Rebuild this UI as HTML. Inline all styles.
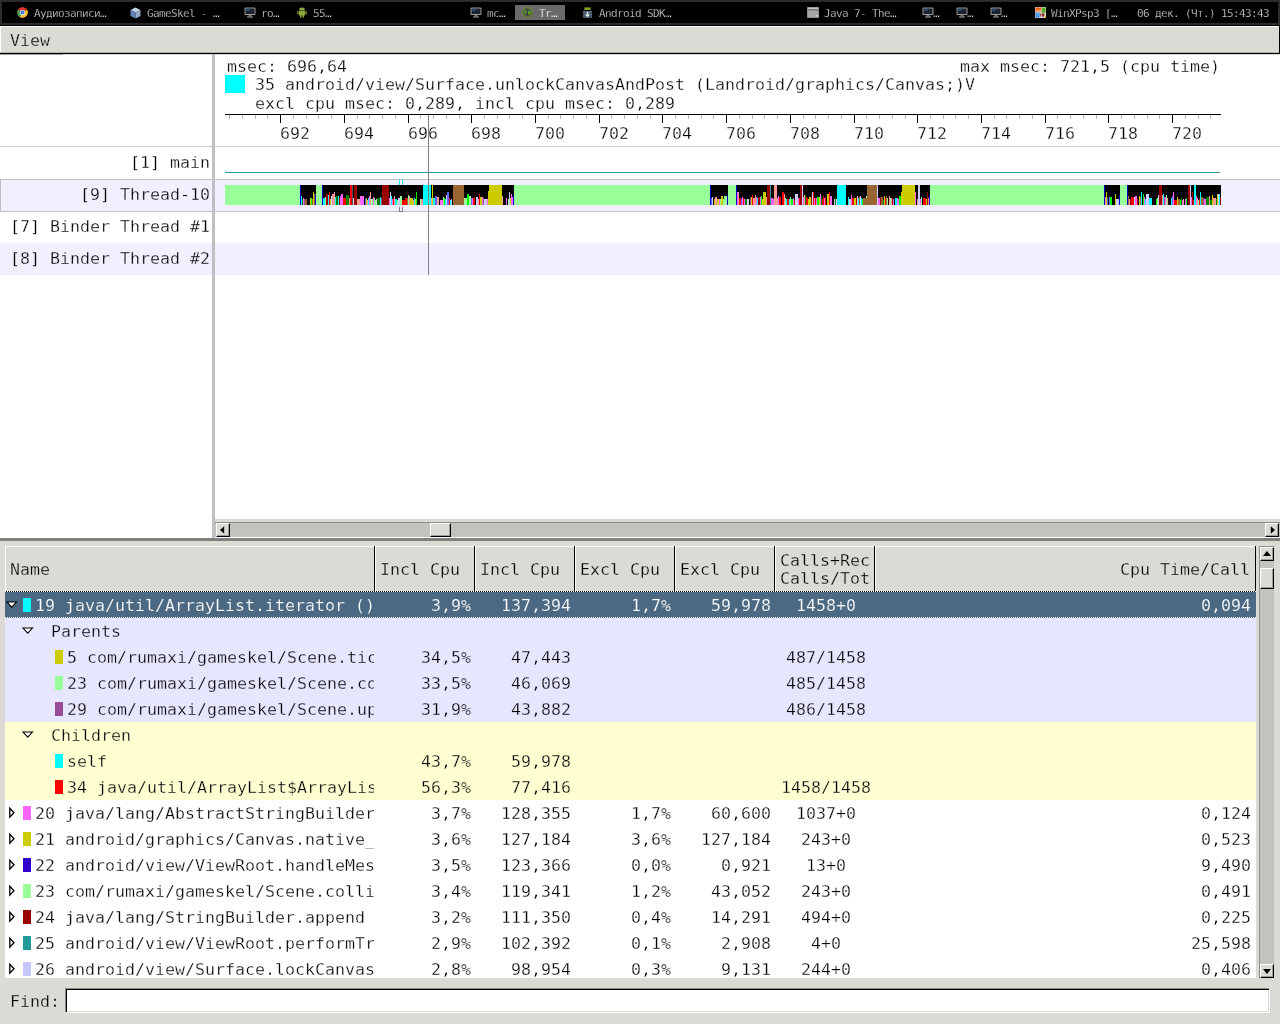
<!DOCTYPE html>
<html lang="ru"><head><meta charset="utf-8"><title>Traceview</title>
<style>
html,body{margin:0;padding:0;}
body{width:1280px;height:1024px;overflow:hidden;position:relative;background:#dcdad5;
 font-family:"DejaVu Sans Mono","Liberation Mono",monospace;font-size:16.61px;color:#000;}
.b{position:absolute;}
.t{position:absolute;white-space:pre;line-height:20px;height:20px;font-size:16.61px;}
.s{position:absolute;white-space:pre;line-height:12px;height:12px;font-size:11px;letter-spacing:-0.62px;color:#dcdcdc;}
svg{position:absolute;display:block;}
#w{position:absolute;left:0;top:0;width:1280px;height:1024px;overflow:hidden;will-change:transform;}

</style></head>
<body>
<div id="w">
<div class="b" style="left:0px;top:0px;width:1280px;height:25px;background:#2b2b2b;"></div>
<div class="b" style="left:2px;top:2px;width:1276px;height:21px;background:#000;"></div>
<div class="b" style="left:0px;top:25px;width:1280px;height:1px;background:#000;"></div>
<div class="b" style="left:0px;top:26px;width:1280px;height:1px;background:#fff;"></div>
<div class="b" style="left:515px;top:5px;width:50px;height:15px;background:#6a6a6a;"></div>
<svg style="left:17px;top:7px" width="11" height="11" viewBox="0 0 22 22"><circle cx="11" cy="11" r="10.5" fill="#d93a2b"/><path d="M11 11 L1.9 5.7 A10.5 10.5 0 0 0 6.2 20.3 Z" fill="#3aa757"/><path d="M11 11 L6.2 20.3 A10.5 10.5 0 0 0 20.1 5.7 Z" fill="#f2c230"/><path d="M11 11 L20.1 5.7 A10.5 10.5 0 0 0 1.9 5.7 Z" fill="#d93a2b"/><circle cx="11" cy="11" r="5.2" fill="#eef"/><circle cx="11" cy="11" r="4" fill="#3b7de0"/></svg>
<div class="s" style="left:34px;top:8px;-webkit-text-stroke:0.25px #000;">Аудиозаписи…</div>
<svg style="left:130px;top:7px" width="11" height="12" viewBox="0 0 22 24"><path d="M11 1 L21 6 L11 11 L1 6 Z" fill="#c4d4e8"/><path d="M1 6 L11 11 L11 23 L1 18 Z" fill="#5f82b4"/><path d="M21 6 L11 11 L11 23 L21 18 Z" fill="#93a9c6"/></svg>
<div class="s" style="left:147px;top:8px;-webkit-text-stroke:0.25px #000;">GameSkel - …</div>
<svg style="left:244px;top:7px" width="12" height="11" viewBox="0 0 24 22"><rect x="1" y="1" width="22" height="15" rx="2" fill="#9a9a9a"/><rect x="3" y="3" width="18" height="11" fill="#1c2430"/><rect x="5" y="5" width="6" height="2" fill="#3a7be0"/><rect x="9" y="16" width="6" height="3" fill="#777"/><rect x="6" y="19" width="12" height="2" fill="#aaa"/></svg>
<div class="s" style="left:261px;top:8px;-webkit-text-stroke:0.25px #000;">ro…</div>
<svg style="left:297px;top:7px" width="10" height="11" viewBox="0 0 20 22"><path d="M4 7 A6 6 0 0 1 16 7 Z" fill="#8faa3c"/><rect x="4" y="8" width="12" height="9" rx="1" fill="#8faa3c"/><rect x="0.5" y="8" width="2.6" height="7" rx="1.3" fill="#8faa3c"/><rect x="16.9" y="8" width="2.6" height="7" rx="1.3" fill="#8faa3c"/><rect x="6" y="16" width="3" height="5.5" rx="1.3" fill="#8faa3c"/><rect x="11" y="16" width="3" height="5.5" rx="1.3" fill="#8faa3c"/></svg>
<div class="s" style="left:313px;top:8px;-webkit-text-stroke:0.25px #000;">55…</div>
<svg style="left:470px;top:7px" width="12" height="11" viewBox="0 0 24 22"><rect x="1" y="1" width="22" height="15" rx="2" fill="#9a9a9a"/><rect x="3" y="3" width="18" height="11" fill="#1c2430"/><rect x="5" y="5" width="6" height="2" fill="#3a7be0"/><rect x="9" y="16" width="6" height="3" fill="#777"/><rect x="6" y="19" width="12" height="2" fill="#aaa"/></svg>
<div class="s" style="left:487px;top:8px;-webkit-text-stroke:0.25px #000;">mc…</div>
<svg style="left:522px;top:7px" width="11" height="11" viewBox="0 0 22 22"><circle cx="11" cy="11" r="9.6" fill="#4f5552" stroke="#6f9f12" stroke-width="1.8"/><path d="M5 8 L9 5 L10 11 L6 14 Z" fill="#5ea312"/><path d="M12 9 L17 7 L17 14 L13 17 Z" fill="#5ea312"/><path d="M9 3 L12 19" stroke="#2f3540" stroke-width="2"/></svg>
<div class="s" style="left:539px;top:8px;-webkit-text-stroke:0.25px #6a6a6a;color:#fff;">Tr…</div>
<svg style="left:583px;top:7px" width="9" height="11" viewBox="0 0 18 22"><path d="M2 6 A7 5.5 0 0 1 16 6 Z" fill="#7fa51e"/><path d="M3 0 L5 3 M15 0 L13 3" stroke="#7fa51e" stroke-width="1.5"/><rect x="0" y="8" width="18" height="14" fill="#4a5b6c"/><rect x="0" y="8" width="18" height="1.5" fill="#6d7f90"/><path d="M7.5 10 H10.5 V15 H14 L9 20.5 L4 15 H7.5 Z" fill="#e8edf2"/></svg>
<div class="s" style="left:599px;top:8px;-webkit-text-stroke:0.25px #000;">Android SDK…</div>
<svg style="left:807px;top:7px" width="12" height="11" viewBox="0 0 24 22"><rect x="0" y="0" width="24" height="22" rx="2" fill="#7d7d7d"/><rect x="1" y="1" width="22" height="4" fill="#c4c4c4"/><rect x="1" y="5" width="22" height="2" fill="#5a5a5a"/><rect x="1" y="7" width="22" height="14" fill="#a6a6a6"/><rect x="19" y="16" width="3" height="3" fill="#e0e0e0"/></svg>
<div class="s" style="left:824px;top:8px;-webkit-text-stroke:0.25px #000;">Java 7- The…</div>
<svg style="left:922px;top:7px" width="12" height="11" viewBox="0 0 24 22"><rect x="1" y="1" width="22" height="15" rx="2" fill="#9a9a9a"/><rect x="3" y="3" width="18" height="11" fill="#1c2430"/><rect x="5" y="5" width="6" height="2" fill="#3a7be0"/><rect x="9" y="16" width="6" height="3" fill="#777"/><rect x="6" y="19" width="12" height="2" fill="#aaa"/></svg>
<div class="s" style="left:933px;top:8px;-webkit-text-stroke:0.25px #000;">…</div>
<svg style="left:956px;top:7px" width="12" height="11" viewBox="0 0 24 22"><rect x="1" y="1" width="22" height="15" rx="2" fill="#9a9a9a"/><rect x="3" y="3" width="18" height="11" fill="#1c2430"/><rect x="5" y="5" width="6" height="2" fill="#3a7be0"/><rect x="9" y="16" width="6" height="3" fill="#777"/><rect x="6" y="19" width="12" height="2" fill="#aaa"/></svg>
<div class="s" style="left:967px;top:8px;-webkit-text-stroke:0.25px #000;">…</div>
<svg style="left:990px;top:7px" width="12" height="11" viewBox="0 0 24 22"><rect x="1" y="1" width="22" height="15" rx="2" fill="#9a9a9a"/><rect x="3" y="3" width="18" height="11" fill="#1c2430"/><rect x="5" y="5" width="6" height="2" fill="#3a7be0"/><rect x="9" y="16" width="6" height="3" fill="#777"/><rect x="6" y="19" width="12" height="2" fill="#aaa"/></svg>
<div class="s" style="left:1001px;top:8px;-webkit-text-stroke:0.25px #000;">…</div>
<svg style="left:1035px;top:7px" width="11" height="11" viewBox="0 0 22 22"><rect width="22" height="22" fill="#d9d4cc"/><path d="M1 1 H13 L12 9 Q6 8 1 11 Z" fill="#e8601c"/><path d="M1 7 Q6 5 12 6 L12 9 Q6 8 1 11 Z" fill="#f2a66a"/><path d="M14.5 1 H21 V12 Q17 10 13 12 Z" fill="#52a822"/><path d="M1 12 Q6 10 9.5 12 L9 21 H1 Z" fill="#2f86e0"/><path d="M3 13 Q6 12 8 13.5 L7.5 17 H3 Z" fill="#6ab6f0"/><rect x="10.5" y="13" width="2" height="6" fill="#8a2020"/><rect x="14" y="13" width="4.5" height="6" fill="#8a2020"/><path d="M17 22 L22 17 V22 Z" fill="#e8b838"/></svg>
<div class="s" style="left:1051px;top:8px;-webkit-text-stroke:0.25px #000;">WinXPsp3 […</div>
<div class="s" style="left:1137px;top:8px;-webkit-text-stroke:0.25px #000;">06 дек. (Чт.) 15:43:43</div>
<div class="b" style="left:0px;top:27px;width:1280px;height:26px;background:#dcdad5;"></div>
<div class="b" style="left:0px;top:27px;width:1px;height:26px;background:#fff;"></div>
<div class="t" style="top:31px;-webkit-text-stroke:0.3px #dcdad5;left:10px;">View</div>
<div class="b" style="left:0px;top:52px;width:1280px;height:1px;background:#b4b2ad;"></div>
<div class="b" style="left:0px;top:53px;width:1280px;height:1px;background:#000;"></div>
<div class="b" style="left:1279px;top:26px;width:1px;height:28px;background:#000;"></div>
<div class="b" style="left:0px;top:54px;width:1280px;height:484px;background:#fff;"></div>
<div class="b" style="left:0px;top:54px;width:63px;height:1px;background:#9a9a9a;"></div>
<div class="b" style="left:63px;top:54px;width:1217px;height:1px;background:#dadada;"></div>
<div class="t" style="top:57px;-webkit-text-stroke:0.3px #fff;left:227px;">msec: 696,64</div>
<div class="t" style="top:57px;-webkit-text-stroke:0.3px #fff;left:960px;">max msec: 721,5 (cpu time)</div>
<div class="b" style="left:225px;top:75px;width:20px;height:18px;background:#00ffff;"></div>
<div class="t" style="top:75px;-webkit-text-stroke:0.3px #fff;left:255px;">35 android/view/Surface.unlockCanvasAndPost (Landroid/graphics/Canvas;)V</div>
<div class="t" style="top:94px;-webkit-text-stroke:0.3px #fff;left:255px;">excl cpu msec: 0,289, incl cpu msec: 0,289</div>
<div class="b" style="left:0px;top:146px;width:1280px;height:1px;background:#d0d0c8;"></div>
<div class="b" style="left:0px;top:179px;width:1280px;height:33px;background:#c0c0c0;"></div>
<div class="b" style="left:1px;top:180px;width:1279px;height:31px;background:#f0f0ff;"></div>
<div class="b" style="left:0px;top:243px;width:1280px;height:32px;background:#f0f0ff;"></div>
<svg style="left:0;top:0" width="1280" height="540" shape-rendering="crispEdges"><rect x="225" y="114" width="996" height="1" fill="#000"/><rect x="229" y="115" width="1" height="4" fill="#b8b8b8"/><rect x="242" y="115" width="1" height="4" fill="#b8b8b8"/><rect x="255" y="115" width="1" height="4" fill="#b8b8b8"/><rect x="267" y="115" width="1" height="4" fill="#b8b8b8"/><rect x="280" y="115" width="1" height="8" fill="#000"/><rect x="293" y="115" width="1" height="4" fill="#b8b8b8"/><rect x="306" y="115" width="1" height="4" fill="#b8b8b8"/><rect x="318" y="115" width="1" height="4" fill="#b8b8b8"/><rect x="331" y="115" width="1" height="4" fill="#b8b8b8"/><rect x="344" y="115" width="1" height="8" fill="#000"/><rect x="357" y="115" width="1" height="4" fill="#b8b8b8"/><rect x="369" y="115" width="1" height="4" fill="#b8b8b8"/><rect x="382" y="115" width="1" height="4" fill="#b8b8b8"/><rect x="395" y="115" width="1" height="4" fill="#b8b8b8"/><rect x="408" y="115" width="1" height="8" fill="#000"/><rect x="420" y="115" width="1" height="4" fill="#b8b8b8"/><rect x="433" y="115" width="1" height="4" fill="#b8b8b8"/><rect x="446" y="115" width="1" height="4" fill="#b8b8b8"/><rect x="459" y="115" width="1" height="4" fill="#b8b8b8"/><rect x="471" y="115" width="1" height="8" fill="#000"/><rect x="484" y="115" width="1" height="4" fill="#b8b8b8"/><rect x="497" y="115" width="1" height="4" fill="#b8b8b8"/><rect x="509" y="115" width="1" height="4" fill="#b8b8b8"/><rect x="522" y="115" width="1" height="4" fill="#b8b8b8"/><rect x="535" y="115" width="1" height="8" fill="#000"/><rect x="548" y="115" width="1" height="4" fill="#b8b8b8"/><rect x="560" y="115" width="1" height="4" fill="#b8b8b8"/><rect x="573" y="115" width="1" height="4" fill="#b8b8b8"/><rect x="586" y="115" width="1" height="4" fill="#b8b8b8"/><rect x="599" y="115" width="1" height="8" fill="#000"/><rect x="611" y="115" width="1" height="4" fill="#b8b8b8"/><rect x="624" y="115" width="1" height="4" fill="#b8b8b8"/><rect x="637" y="115" width="1" height="4" fill="#b8b8b8"/><rect x="650" y="115" width="1" height="4" fill="#b8b8b8"/><rect x="662" y="115" width="1" height="8" fill="#000"/><rect x="675" y="115" width="1" height="4" fill="#b8b8b8"/><rect x="688" y="115" width="1" height="4" fill="#b8b8b8"/><rect x="701" y="115" width="1" height="4" fill="#b8b8b8"/><rect x="713" y="115" width="1" height="4" fill="#b8b8b8"/><rect x="726" y="115" width="1" height="8" fill="#000"/><rect x="739" y="115" width="1" height="4" fill="#b8b8b8"/><rect x="752" y="115" width="1" height="4" fill="#b8b8b8"/><rect x="764" y="115" width="1" height="4" fill="#b8b8b8"/><rect x="777" y="115" width="1" height="4" fill="#b8b8b8"/><rect x="790" y="115" width="1" height="8" fill="#000"/><rect x="803" y="115" width="1" height="4" fill="#b8b8b8"/><rect x="815" y="115" width="1" height="4" fill="#b8b8b8"/><rect x="828" y="115" width="1" height="4" fill="#b8b8b8"/><rect x="841" y="115" width="1" height="4" fill="#b8b8b8"/><rect x="854" y="115" width="1" height="8" fill="#000"/><rect x="866" y="115" width="1" height="4" fill="#b8b8b8"/><rect x="879" y="115" width="1" height="4" fill="#b8b8b8"/><rect x="892" y="115" width="1" height="4" fill="#b8b8b8"/><rect x="905" y="115" width="1" height="4" fill="#b8b8b8"/><rect x="917" y="115" width="1" height="8" fill="#000"/><rect x="930" y="115" width="1" height="4" fill="#b8b8b8"/><rect x="943" y="115" width="1" height="4" fill="#b8b8b8"/><rect x="955" y="115" width="1" height="4" fill="#b8b8b8"/><rect x="968" y="115" width="1" height="4" fill="#b8b8b8"/><rect x="981" y="115" width="1" height="8" fill="#000"/><rect x="994" y="115" width="1" height="4" fill="#b8b8b8"/><rect x="1006" y="115" width="1" height="4" fill="#b8b8b8"/><rect x="1019" y="115" width="1" height="4" fill="#b8b8b8"/><rect x="1032" y="115" width="1" height="4" fill="#b8b8b8"/><rect x="1045" y="115" width="1" height="8" fill="#000"/><rect x="1057" y="115" width="1" height="4" fill="#b8b8b8"/><rect x="1070" y="115" width="1" height="4" fill="#b8b8b8"/><rect x="1083" y="115" width="1" height="4" fill="#b8b8b8"/><rect x="1096" y="115" width="1" height="4" fill="#b8b8b8"/><rect x="1108" y="115" width="1" height="8" fill="#000"/><rect x="1121" y="115" width="1" height="4" fill="#b8b8b8"/><rect x="1134" y="115" width="1" height="4" fill="#b8b8b8"/><rect x="1147" y="115" width="1" height="4" fill="#b8b8b8"/><rect x="1159" y="115" width="1" height="4" fill="#b8b8b8"/><rect x="1172" y="115" width="1" height="8" fill="#000"/><rect x="1185" y="115" width="1" height="4" fill="#b8b8b8"/><rect x="1198" y="115" width="1" height="4" fill="#b8b8b8"/><rect x="1210" y="115" width="1" height="4" fill="#b8b8b8"/><rect x="225" y="172" width="995" height="1" fill="#2f9a9a"/><rect x="225" y="185" width="996" height="20" fill="#99ff99"/><rect x="300" y="185" width="16" height="20" fill="#000"/><rect x="301" y="196" width="1" height="9" fill="#00ffff"/><rect x="302" y="199" width="1" height="6" fill="#008000"/><rect x="303" y="198" width="1" height="7" fill="#ff66ff"/><rect x="304" y="199" width="1" height="6" fill="#994d99"/><rect x="305" y="199" width="1" height="6" fill="#996633"/><rect x="306" y="199" width="1" height="6" fill="#996633"/><rect x="310" y="198" width="1" height="7" fill="#cccc00"/><rect x="311" y="198" width="1" height="7" fill="#00ff00"/><rect x="312" y="199" width="1" height="6" fill="#996633"/><rect x="313" y="192" width="1" height="13" fill="#cccc00"/><rect x="314" y="194" width="2" height="11" fill="#996633"/><rect x="300" y="185" width="1" height="20" fill="#0000cc"/><rect x="315" y="195" width="1" height="10" fill="#0000cc"/><rect x="322" y="185" width="192" height="20" fill="#000"/><rect x="323" y="198" width="2" height="7" fill="#00ffff"/><rect x="325" y="197" width="1" height="8" fill="#99ff99"/><rect x="326" y="194" width="2" height="11" fill="#990000"/><rect x="328" y="195" width="1" height="10" fill="#00ffff"/><rect x="329" y="192" width="1" height="13" fill="#ff0000"/><rect x="330" y="199" width="1" height="6" fill="#cccc00"/><rect x="331" y="196" width="1" height="9" fill="#ccccff"/><rect x="332" y="194" width="2" height="11" fill="#ff9999"/><rect x="334" y="192" width="1" height="13" fill="#ff9999"/><rect x="335" y="197" width="1" height="8" fill="#00ffff"/><rect x="336" y="196" width="2" height="9" fill="#008000"/><rect x="338" y="196" width="1" height="9" fill="#00ffff"/><rect x="339" y="198" width="1" height="7" fill="#990000"/><rect x="340" y="196" width="1" height="9" fill="#ff66ff"/><rect x="341" y="194" width="2" height="11" fill="#ff66ff"/><rect x="343" y="198" width="3" height="7" fill="#ff0000"/><rect x="346" y="195" width="3" height="10" fill="#008000"/><rect x="349" y="198" width="2" height="7" fill="#ff9999"/><rect x="351" y="198" width="1" height="7" fill="#ff0000"/><rect x="352" y="198" width="2" height="7" fill="#ccccff"/><rect x="355" y="197" width="2" height="8" fill="#99ff99"/><rect x="357" y="199" width="3" height="6" fill="#ff9999"/><rect x="360" y="196" width="3" height="9" fill="#ff66ff"/><rect x="363" y="196" width="1" height="9" fill="#ff66ff"/><rect x="365" y="199" width="1" height="6" fill="#6666ff"/><rect x="366" y="198" width="1" height="7" fill="#cccc00"/><rect x="367" y="200" width="1" height="5" fill="#ff9999"/><rect x="368" y="198" width="1" height="7" fill="#00ffff"/><rect x="369" y="196" width="1" height="9" fill="#ff66ff"/><rect x="370" y="192" width="1" height="13" fill="#ff9999"/><rect x="371" y="199" width="2" height="6" fill="#99ff99"/><rect x="373" y="197" width="1" height="8" fill="#ff66ff"/><rect x="374" y="198" width="1" height="7" fill="#99ff99"/><rect x="375" y="200" width="1" height="5" fill="#99ff99"/><rect x="376" y="199" width="1" height="6" fill="#ccccff"/><rect x="377" y="198" width="3" height="7" fill="#008000"/><rect x="380" y="197" width="1" height="8" fill="#00ffff"/><rect x="381" y="198" width="1" height="7" fill="#994d99"/><rect x="382" y="198" width="2" height="7" fill="#cccc00"/><rect x="384" y="200" width="3" height="5" fill="#ff0000"/><rect x="387" y="198" width="1" height="7" fill="#ccccff"/><rect x="388" y="196" width="1" height="9" fill="#008000"/><rect x="389" y="198" width="1" height="7" fill="#ff66ff"/><rect x="390" y="192" width="1" height="13" fill="#ccccff"/><rect x="391" y="196" width="1" height="9" fill="#00ffff"/><rect x="392" y="199" width="1" height="6" fill="#ff66ff"/><rect x="393" y="198" width="1" height="7" fill="#ff0000"/><rect x="394" y="196" width="1" height="9" fill="#ff9999"/><rect x="395" y="199" width="2" height="6" fill="#00ffff"/><rect x="397" y="200" width="1" height="5" fill="#99ff99"/><rect x="398" y="198" width="2" height="7" fill="#ccccff"/><rect x="400" y="196" width="2" height="9" fill="#99ff99"/><rect x="402" y="200" width="3" height="5" fill="#ff0000"/><rect x="405" y="198" width="1" height="7" fill="#ff0000"/><rect x="406" y="198" width="1" height="7" fill="#ff0000"/><rect x="407" y="198" width="1" height="7" fill="#996633"/><rect x="408" y="195" width="1" height="10" fill="#99ff99"/><rect x="409" y="196" width="1" height="9" fill="#ff9999"/><rect x="410" y="198" width="3" height="7" fill="#cccc00"/><rect x="413" y="200" width="1" height="5" fill="#ff9999"/><rect x="414" y="198" width="1" height="7" fill="#00ffff"/><rect x="415" y="199" width="1" height="6" fill="#cccc00"/><rect x="416" y="192" width="1" height="13" fill="#00ff00"/><rect x="420" y="199" width="1" height="6" fill="#99ff99"/><rect x="421" y="199" width="2" height="6" fill="#ff9999"/><rect x="423" y="198" width="1" height="7" fill="#ccccff"/><rect x="424" y="192" width="2" height="13" fill="#99ff99"/><rect x="426" y="197" width="1" height="8" fill="#cccc00"/><rect x="427" y="198" width="1" height="7" fill="#ff0000"/><rect x="428" y="197" width="1" height="8" fill="#ff9999"/><rect x="429" y="198" width="1" height="7" fill="#990000"/><rect x="430" y="198" width="1" height="7" fill="#00ffff"/><rect x="431" y="198" width="1" height="7" fill="#ff9999"/><rect x="432" y="199" width="1" height="6" fill="#ff66ff"/><rect x="433" y="198" width="2" height="7" fill="#00ffff"/><rect x="435" y="196" width="2" height="9" fill="#6666ff"/><rect x="437" y="197" width="2" height="8" fill="#ff9999"/><rect x="440" y="200" width="3" height="5" fill="#ff66ff"/><rect x="443" y="197" width="1" height="8" fill="#99ff99"/><rect x="444" y="198" width="1" height="7" fill="#00ff00"/><rect x="445" y="199" width="1" height="6" fill="#00ffff"/><rect x="446" y="195" width="1" height="10" fill="#ccccff"/><rect x="447" y="192" width="2" height="13" fill="#6666ff"/><rect x="449" y="198" width="1" height="7" fill="#ff0000"/><rect x="450" y="200" width="1" height="5" fill="#00ffff"/><rect x="451" y="199" width="1" height="6" fill="#ccccff"/><rect x="453" y="197" width="1" height="8" fill="#cccc00"/><rect x="454" y="197" width="2" height="8" fill="#ccccff"/><rect x="457" y="198" width="1" height="7" fill="#ccccff"/><rect x="458" y="197" width="1" height="8" fill="#00ffff"/><rect x="459" y="198" width="1" height="7" fill="#990000"/><rect x="460" y="198" width="2" height="7" fill="#ccccff"/><rect x="462" y="197" width="1" height="8" fill="#ff66ff"/><rect x="464" y="198" width="3" height="7" fill="#99ff99"/><rect x="467" y="194" width="2" height="11" fill="#00ff00"/><rect x="469" y="196" width="2" height="9" fill="#99ff99"/><rect x="471" y="198" width="1" height="7" fill="#6666ff"/><rect x="472" y="198" width="1" height="7" fill="#ff66ff"/><rect x="473" y="198" width="1" height="7" fill="#ff0000"/><rect x="474" y="197" width="1" height="8" fill="#ff0000"/><rect x="476" y="197" width="2" height="8" fill="#ccccff"/><rect x="478" y="199" width="1" height="6" fill="#ff9999"/><rect x="479" y="194" width="1" height="11" fill="#ff0000"/><rect x="480" y="197" width="1" height="8" fill="#cccc00"/><rect x="481" y="197" width="1" height="8" fill="#cccc00"/><rect x="482" y="197" width="1" height="8" fill="#ff66ff"/><rect x="483" y="198" width="1" height="7" fill="#994d99"/><rect x="484" y="199" width="3" height="6" fill="#ccccff"/><rect x="487" y="199" width="1" height="6" fill="#ff66ff"/><rect x="488" y="198" width="1" height="7" fill="#ff9999"/><rect x="489" y="198" width="3" height="7" fill="#ccccff"/><rect x="492" y="192" width="2" height="13" fill="#99ff99"/><rect x="494" y="198" width="1" height="7" fill="#ff66ff"/><rect x="495" y="198" width="3" height="7" fill="#99ff99"/><rect x="498" y="200" width="3" height="5" fill="#996633"/><rect x="501" y="199" width="1" height="6" fill="#99ff99"/><rect x="502" y="196" width="1" height="9" fill="#ff9999"/><rect x="506" y="198" width="1" height="7" fill="#ff66ff"/><rect x="508" y="199" width="1" height="6" fill="#99ff99"/><rect x="509" y="192" width="1" height="13" fill="#ccccff"/><rect x="510" y="198" width="1" height="7" fill="#cccc00"/><rect x="511" y="194" width="1" height="11" fill="#ff66ff"/><rect x="512" y="197" width="2" height="8" fill="#ff66ff"/><rect x="322" y="185" width="1" height="20" fill="#0000cc"/><rect x="350" y="185" width="2" height="20" fill="#ff0000"/><rect x="352" y="185" width="1" height="20" fill="#555"/><rect x="354" y="185" width="3" height="20" fill="#990000"/><rect x="382" y="185" width="7" height="20" fill="#990000"/><rect x="423" y="185" width="8" height="20" fill="#00ffff"/><rect x="432" y="185" width="1" height="20" fill="#cccc00"/><rect x="453" y="185" width="11" height="20" fill="#996633"/><rect x="489" y="185" width="13" height="20" fill="#cccc00"/><rect x="488" y="191" width="1" height="14" fill="#cccc00"/><rect x="513" y="195" width="1" height="10" fill="#0000cc"/><rect x="710" y="185" width="18" height="20" fill="#000"/><rect x="711" y="198" width="1" height="7" fill="#6666ff"/><rect x="712" y="197" width="1" height="8" fill="#ccccff"/><rect x="714" y="199" width="1" height="6" fill="#cccc00"/><rect x="715" y="197" width="2" height="8" fill="#ff9999"/><rect x="717" y="199" width="2" height="6" fill="#cccc00"/><rect x="719" y="199" width="1" height="6" fill="#ff66ff"/><rect x="720" y="199" width="1" height="6" fill="#99ff99"/><rect x="721" y="196" width="2" height="9" fill="#cccc00"/><rect x="723" y="199" width="1" height="6" fill="#99ff99"/><rect x="724" y="196" width="3" height="9" fill="#99ff99"/><rect x="727" y="199" width="1" height="6" fill="#008000"/><rect x="710" y="185" width="1" height="20" fill="#0000cc"/><rect x="727" y="195" width="1" height="10" fill="#0000cc"/><rect x="736" y="185" width="194" height="20" fill="#000"/><rect x="737" y="192" width="1" height="13" fill="#ff66ff"/><rect x="738" y="192" width="1" height="13" fill="#ff9999"/><rect x="739" y="198" width="2" height="7" fill="#ff0000"/><rect x="741" y="199" width="1" height="6" fill="#6666ff"/><rect x="742" y="197" width="1" height="8" fill="#ff66ff"/><rect x="743" y="198" width="1" height="7" fill="#ff0000"/><rect x="744" y="199" width="1" height="6" fill="#ff66ff"/><rect x="745" y="199" width="2" height="6" fill="#008000"/><rect x="747" y="199" width="2" height="6" fill="#ccccff"/><rect x="750" y="198" width="1" height="7" fill="#994d99"/><rect x="751" y="197" width="1" height="8" fill="#cccc00"/><rect x="752" y="195" width="1" height="10" fill="#ff0000"/><rect x="753" y="198" width="2" height="7" fill="#ff9999"/><rect x="755" y="195" width="1" height="10" fill="#ff9999"/><rect x="756" y="197" width="1" height="8" fill="#ff66ff"/><rect x="757" y="198" width="1" height="7" fill="#00ffff"/><rect x="758" y="197" width="2" height="8" fill="#990000"/><rect x="760" y="197" width="1" height="8" fill="#ff66ff"/><rect x="761" y="196" width="1" height="9" fill="#00ff00"/><rect x="762" y="199" width="1" height="6" fill="#cccc00"/><rect x="763" y="192" width="3" height="13" fill="#cccc00"/><rect x="766" y="197" width="1" height="8" fill="#ff9999"/><rect x="767" y="198" width="2" height="7" fill="#994d99"/><rect x="769" y="199" width="1" height="6" fill="#6666ff"/><rect x="770" y="198" width="1" height="7" fill="#ff0000"/><rect x="771" y="198" width="2" height="7" fill="#ff66ff"/><rect x="773" y="199" width="1" height="6" fill="#ff66ff"/><rect x="774" y="196" width="1" height="9" fill="#99ff99"/><rect x="775" y="198" width="3" height="7" fill="#ff9999"/><rect x="778" y="196" width="1" height="9" fill="#ff66ff"/><rect x="779" y="197" width="2" height="8" fill="#ff0000"/><rect x="782" y="192" width="2" height="13" fill="#ff0000"/><rect x="784" y="194" width="1" height="11" fill="#ff9999"/><rect x="785" y="198" width="1" height="7" fill="#99ff99"/><rect x="786" y="199" width="1" height="6" fill="#00ffff"/><rect x="787" y="199" width="2" height="6" fill="#ff0000"/><rect x="789" y="199" width="1" height="6" fill="#00ffff"/><rect x="790" y="197" width="1" height="8" fill="#99ff99"/><rect x="791" y="199" width="2" height="6" fill="#00ff00"/><rect x="793" y="198" width="1" height="7" fill="#ff66ff"/><rect x="794" y="200" width="1" height="5" fill="#ff0000"/><rect x="795" y="194" width="3" height="11" fill="#ccccff"/><rect x="798" y="198" width="1" height="7" fill="#ff66ff"/><rect x="799" y="198" width="3" height="7" fill="#ff0000"/><rect x="802" y="197" width="2" height="8" fill="#ff66ff"/><rect x="804" y="195" width="1" height="10" fill="#ff9999"/><rect x="805" y="195" width="1" height="10" fill="#008000"/><rect x="806" y="197" width="1" height="8" fill="#ff0000"/><rect x="807" y="198" width="1" height="7" fill="#ff0000"/><rect x="808" y="199" width="1" height="6" fill="#cccc00"/><rect x="809" y="197" width="2" height="8" fill="#cccc00"/><rect x="811" y="197" width="1" height="8" fill="#990000"/><rect x="812" y="192" width="1" height="13" fill="#ccccff"/><rect x="813" y="192" width="1" height="13" fill="#ff0000"/><rect x="814" y="198" width="1" height="7" fill="#ff66ff"/><rect x="815" y="198" width="1" height="7" fill="#ff0000"/><rect x="816" y="198" width="1" height="7" fill="#ff66ff"/><rect x="817" y="197" width="2" height="8" fill="#00ff00"/><rect x="819" y="197" width="1" height="8" fill="#cccc00"/><rect x="820" y="194" width="1" height="11" fill="#ff66ff"/><rect x="821" y="196" width="1" height="9" fill="#008000"/><rect x="822" y="199" width="1" height="6" fill="#ff0000"/><rect x="823" y="196" width="1" height="9" fill="#ff0000"/><rect x="824" y="198" width="1" height="7" fill="#ff66ff"/><rect x="825" y="197" width="1" height="8" fill="#ff0000"/><rect x="827" y="194" width="2" height="11" fill="#cccc00"/><rect x="829" y="192" width="1" height="13" fill="#ff0000"/><rect x="830" y="196" width="2" height="9" fill="#ff66ff"/><rect x="834" y="199" width="1" height="6" fill="#ccccff"/><rect x="835" y="197" width="1" height="8" fill="#008000"/><rect x="836" y="199" width="1" height="6" fill="#ccccff"/><rect x="837" y="197" width="1" height="8" fill="#ff0000"/><rect x="839" y="194" width="1" height="11" fill="#ff66ff"/><rect x="840" y="192" width="1" height="13" fill="#99ff99"/><rect x="841" y="197" width="2" height="8" fill="#99ff99"/><rect x="843" y="197" width="1" height="8" fill="#ff9999"/><rect x="844" y="199" width="1" height="6" fill="#99ff99"/><rect x="845" y="198" width="1" height="7" fill="#994d99"/><rect x="848" y="197" width="1" height="8" fill="#00ffff"/><rect x="849" y="199" width="2" height="6" fill="#ccccff"/><rect x="851" y="195" width="1" height="10" fill="#ff66ff"/><rect x="852" y="198" width="2" height="7" fill="#ff0000"/><rect x="854" y="198" width="2" height="7" fill="#cccc00"/><rect x="856" y="197" width="1" height="8" fill="#990000"/><rect x="857" y="196" width="1" height="9" fill="#ccccff"/><rect x="858" y="198" width="1" height="7" fill="#00ffff"/><rect x="859" y="197" width="1" height="8" fill="#996633"/><rect x="860" y="196" width="1" height="9" fill="#ccccff"/><rect x="861" y="198" width="1" height="7" fill="#00ffff"/><rect x="862" y="199" width="1" height="6" fill="#00ff00"/><rect x="863" y="198" width="1" height="7" fill="#ff9999"/><rect x="865" y="199" width="1" height="6" fill="#cccc00"/><rect x="866" y="196" width="1" height="9" fill="#99ff99"/><rect x="867" y="197" width="1" height="8" fill="#ff0000"/><rect x="868" y="196" width="1" height="9" fill="#cccc00"/><rect x="869" y="198" width="1" height="7" fill="#ff66ff"/><rect x="870" y="199" width="1" height="6" fill="#ccccff"/><rect x="871" y="197" width="1" height="8" fill="#ff0000"/><rect x="872" y="197" width="1" height="8" fill="#ff9999"/><rect x="874" y="199" width="2" height="6" fill="#ff0000"/><rect x="876" y="198" width="1" height="7" fill="#00ffff"/><rect x="877" y="198" width="3" height="7" fill="#ff66ff"/><rect x="880" y="197" width="1" height="8" fill="#990000"/><rect x="881" y="197" width="2" height="8" fill="#996633"/><rect x="883" y="200" width="1" height="5" fill="#008000"/><rect x="884" y="196" width="1" height="9" fill="#cccc00"/><rect x="885" y="198" width="1" height="7" fill="#ff0000"/><rect x="886" y="196" width="1" height="9" fill="#996633"/><rect x="887" y="198" width="1" height="7" fill="#99ff99"/><rect x="889" y="196" width="1" height="9" fill="#ff9999"/><rect x="890" y="198" width="1" height="7" fill="#99ff99"/><rect x="891" y="198" width="1" height="7" fill="#ff9999"/><rect x="892" y="198" width="1" height="7" fill="#990000"/><rect x="893" y="199" width="1" height="6" fill="#ff66ff"/><rect x="895" y="198" width="2" height="7" fill="#00ffff"/><rect x="897" y="198" width="1" height="7" fill="#ff66ff"/><rect x="898" y="199" width="1" height="6" fill="#ff66ff"/><rect x="899" y="196" width="3" height="9" fill="#00ff00"/><rect x="902" y="198" width="1" height="7" fill="#ff66ff"/><rect x="903" y="199" width="3" height="6" fill="#6666ff"/><rect x="906" y="194" width="1" height="11" fill="#cccc00"/><rect x="907" y="197" width="1" height="8" fill="#996633"/><rect x="908" y="196" width="1" height="9" fill="#ff9999"/><rect x="909" y="200" width="3" height="5" fill="#ff0000"/><rect x="912" y="194" width="2" height="11" fill="#ccccff"/><rect x="914" y="192" width="2" height="13" fill="#ff66ff"/><rect x="917" y="199" width="1" height="6" fill="#ff9999"/><rect x="918" y="199" width="3" height="6" fill="#ff66ff"/><rect x="921" y="197" width="1" height="8" fill="#99ff99"/><rect x="923" y="198" width="3" height="7" fill="#ff0000"/><rect x="926" y="199" width="1" height="6" fill="#cccc00"/><rect x="927" y="192" width="1" height="13" fill="#990000"/><rect x="928" y="198" width="1" height="7" fill="#ff9999"/><rect x="929" y="197" width="1" height="8" fill="#00ffff"/><rect x="736" y="185" width="1" height="20" fill="#0000cc"/><rect x="767" y="185" width="3" height="20" fill="#990000"/><rect x="770" y="185" width="1" height="20" fill="#339999"/><rect x="774" y="185" width="3" height="20" fill="#ff9999"/><rect x="800" y="185" width="2" height="20" fill="#990000"/><rect x="802" y="185" width="1" height="20" fill="#ccccff"/><rect x="837" y="185" width="9" height="20" fill="#00ffff"/><rect x="867" y="185" width="10" height="20" fill="#996633"/><rect x="877" y="185" width="1" height="20" fill="#ccccff"/><rect x="863" y="198" width="4" height="7" fill="#996633"/><rect x="902" y="185" width="13" height="20" fill="#cccc00"/><rect x="901" y="192" width="1" height="13" fill="#cccc00"/><rect x="918" y="185" width="2" height="20" fill="#ccccff"/><rect x="929" y="195" width="1" height="10" fill="#0000cc"/><rect x="1104" y="185" width="16" height="20" fill="#000"/><rect x="1105" y="197" width="1" height="8" fill="#ff9999"/><rect x="1106" y="192" width="1" height="13" fill="#cccc00"/><rect x="1107" y="198" width="1" height="7" fill="#6666ff"/><rect x="1109" y="197" width="1" height="8" fill="#6666ff"/><rect x="1110" y="197" width="2" height="8" fill="#00ff00"/><rect x="1115" y="194" width="1" height="11" fill="#cccc00"/><rect x="1116" y="199" width="3" height="6" fill="#ccccff"/><rect x="1119" y="196" width="1" height="9" fill="#008000"/><rect x="1104" y="185" width="1" height="20" fill="#0000cc"/><rect x="1119" y="195" width="1" height="10" fill="#0000cc"/><rect x="1127" y="185" width="94" height="20" fill="#000"/><rect x="1128" y="196" width="1" height="9" fill="#996633"/><rect x="1129" y="199" width="1" height="6" fill="#ff9999"/><rect x="1130" y="199" width="1" height="6" fill="#990000"/><rect x="1131" y="197" width="3" height="8" fill="#ff0000"/><rect x="1134" y="197" width="1" height="8" fill="#ccccff"/><rect x="1135" y="196" width="2" height="9" fill="#ff66ff"/><rect x="1137" y="199" width="1" height="6" fill="#ff0000"/><rect x="1139" y="196" width="1" height="9" fill="#cccc00"/><rect x="1140" y="197" width="1" height="8" fill="#996633"/><rect x="1141" y="192" width="1" height="13" fill="#00ffff"/><rect x="1143" y="194" width="1" height="11" fill="#00ff00"/><rect x="1144" y="197" width="1" height="8" fill="#ff66ff"/><rect x="1145" y="199" width="1" height="6" fill="#00ffff"/><rect x="1146" y="194" width="3" height="11" fill="#ccccff"/><rect x="1149" y="198" width="3" height="7" fill="#00ffff"/><rect x="1156" y="199" width="1" height="6" fill="#00ff00"/><rect x="1157" y="198" width="1" height="7" fill="#99ff99"/><rect x="1158" y="195" width="2" height="10" fill="#ccccff"/><rect x="1160" y="199" width="1" height="6" fill="#990000"/><rect x="1161" y="192" width="1" height="13" fill="#cccc00"/><rect x="1162" y="195" width="1" height="10" fill="#ff9999"/><rect x="1163" y="194" width="1" height="11" fill="#00ffff"/><rect x="1164" y="197" width="1" height="8" fill="#994d99"/><rect x="1165" y="197" width="1" height="8" fill="#ff66ff"/><rect x="1166" y="195" width="1" height="10" fill="#99ff99"/><rect x="1167" y="198" width="1" height="7" fill="#ff9999"/><rect x="1171" y="198" width="1" height="7" fill="#00ffff"/><rect x="1172" y="196" width="1" height="9" fill="#6666ff"/><rect x="1173" y="192" width="1" height="13" fill="#ff66ff"/><rect x="1174" y="200" width="3" height="5" fill="#ff0000"/><rect x="1177" y="197" width="1" height="8" fill="#cccc00"/><rect x="1178" y="199" width="2" height="6" fill="#996633"/><rect x="1180" y="200" width="1" height="5" fill="#00ff00"/><rect x="1181" y="198" width="1" height="7" fill="#008000"/><rect x="1182" y="200" width="1" height="5" fill="#ff66ff"/><rect x="1183" y="199" width="1" height="6" fill="#ff9999"/><rect x="1185" y="199" width="1" height="6" fill="#ff66ff"/><rect x="1186" y="198" width="1" height="7" fill="#00ff00"/><rect x="1188" y="197" width="1" height="8" fill="#ff66ff"/><rect x="1189" y="198" width="1" height="7" fill="#990000"/><rect x="1190" y="197" width="1" height="8" fill="#ff0000"/><rect x="1191" y="197" width="1" height="8" fill="#ff66ff"/><rect x="1192" y="192" width="1" height="13" fill="#990000"/><rect x="1193" y="200" width="1" height="5" fill="#ff0000"/><rect x="1194" y="196" width="3" height="9" fill="#ff66ff"/><rect x="1197" y="198" width="1" height="7" fill="#ff9999"/><rect x="1198" y="200" width="1" height="5" fill="#99ff99"/><rect x="1199" y="199" width="1" height="6" fill="#ff0000"/><rect x="1200" y="192" width="1" height="13" fill="#00ffff"/><rect x="1201" y="197" width="2" height="8" fill="#996633"/><rect x="1203" y="198" width="1" height="7" fill="#994d99"/><rect x="1204" y="199" width="2" height="6" fill="#ff66ff"/><rect x="1206" y="197" width="3" height="8" fill="#008000"/><rect x="1209" y="196" width="1" height="9" fill="#ff9999"/><rect x="1210" y="200" width="2" height="5" fill="#008000"/><rect x="1212" y="195" width="1" height="10" fill="#cccc00"/><rect x="1213" y="198" width="3" height="7" fill="#ff9999"/><rect x="1216" y="199" width="1" height="6" fill="#008000"/><rect x="1217" y="194" width="1" height="11" fill="#cccc00"/><rect x="1218" y="194" width="1" height="11" fill="#ccccff"/><rect x="1219" y="194" width="1" height="11" fill="#00ffff"/><rect x="1220" y="197" width="1" height="8" fill="#990000"/><rect x="1127" y="185" width="1" height="20" fill="#0000cc"/><rect x="1159" y="185" width="3" height="20" fill="#990000"/><rect x="1188" y="185" width="2" height="20" fill="#990000"/><rect x="1190" y="185" width="1" height="20" fill="#ccccff"/><rect x="1194" y="185" width="2" height="20" fill="#00ffff"/><rect x="399" y="180" width="1" height="5" fill="#00ffff"/><rect x="402" y="180" width="1" height="5" fill="#00ffff"/><rect x="399" y="207" width="1" height="5" fill="#808080"/><rect x="402" y="207" width="1" height="5" fill="#808080"/><rect x="399" y="211" width="4" height="1" fill="#808080"/><rect x="428" y="115" width="1" height="160" fill="#808080"/></svg>
<div class="t" style="top:124px;-webkit-text-stroke:0.3px #fff;left:280px;">692</div>
<div class="t" style="top:124px;-webkit-text-stroke:0.3px #fff;left:344px;">694</div>
<div class="t" style="top:124px;-webkit-text-stroke:0.3px #fff;left:408px;">696</div>
<div class="t" style="top:124px;-webkit-text-stroke:0.3px #fff;left:471px;">698</div>
<div class="t" style="top:124px;-webkit-text-stroke:0.3px #fff;left:535px;">700</div>
<div class="t" style="top:124px;-webkit-text-stroke:0.3px #fff;left:599px;">702</div>
<div class="t" style="top:124px;-webkit-text-stroke:0.3px #fff;left:662px;">704</div>
<div class="t" style="top:124px;-webkit-text-stroke:0.3px #fff;left:726px;">706</div>
<div class="t" style="top:124px;-webkit-text-stroke:0.3px #fff;left:790px;">708</div>
<div class="t" style="top:124px;-webkit-text-stroke:0.3px #fff;left:854px;">710</div>
<div class="t" style="top:124px;-webkit-text-stroke:0.3px #fff;left:917px;">712</div>
<div class="t" style="top:124px;-webkit-text-stroke:0.3px #fff;left:981px;">714</div>
<div class="t" style="top:124px;-webkit-text-stroke:0.3px #fff;left:1045px;">716</div>
<div class="t" style="top:124px;-webkit-text-stroke:0.3px #fff;left:1108px;">718</div>
<div class="t" style="top:124px;-webkit-text-stroke:0.3px #fff;left:1172px;">720</div>
<div class="t" style="top:153px;-webkit-text-stroke:0.3px #fff;right:1070px;">[1] main</div>
<div class="t" style="top:185px;-webkit-text-stroke:0.3px #f0f0ff;right:1070px;">[9] Thread-10</div>
<div class="t" style="top:217px;-webkit-text-stroke:0.3px #fff;right:1070px;">[7] Binder Thread #1</div>
<div class="t" style="top:249px;-webkit-text-stroke:0.3px #f0f0ff;right:1070px;">[8] Binder Thread #2</div>
<div class="b" style="left:212px;top:54px;width:3px;height:484px;background:#c0c0c0;"></div>
<div class="b" style="left:215px;top:519px;width:1065px;height:19px;background:#dcdad5;"></div>
<div class="b" style="left:215px;top:537px;width:1065px;height:1px;background:#fff;"></div>
<div class="b" style="left:215px;top:522px;width:1065px;height:15px;background:#c4c2bd;border-top:1px solid #8e8c87;box-sizing:border-box;"></div>
<div class="b" style="left:216px;top:523px;width:14px;height:14px;background:#dcdad5;box-sizing:border-box;border:1px solid;border-color:#fff #000 #000 #fff;box-shadow:inset -1px -1px 0 #9e9c97;"></div>
<svg style="left:219px;top:525px" width="8" height="10"><path d="M5.2 1.3 L1 5 L5.2 8.7 Z" fill="#000"/></svg>
<div class="b" style="left:1265px;top:523px;width:14px;height:14px;background:#dcdad5;box-sizing:border-box;border:1px solid;border-color:#fff #000 #000 #fff;box-shadow:inset -1px -1px 0 #9e9c97;"></div>
<svg style="left:1268px;top:525px" width="8" height="10"><path d="M2.8 1.3 L7 5 L2.8 8.7 Z" fill="#000"/></svg>
<div class="b" style="left:430px;top:523px;width:21px;height:14px;background:#dcdad5;box-sizing:border-box;border:1px solid;border-color:#fff #000 #000 #fff;box-shadow:inset -1px -1px 0 #9e9c97;"></div>
<div class="b" style="left:0px;top:538px;width:1280px;height:3px;background:#808080;"></div>
<div class="b" style="left:5px;top:546px;width:1251px;height:46px;background:#dcdad5;"></div>
<div class="b" style="left:5px;top:546px;width:1251px;height:1px;background:#fff;"></div>
<div class="b" style="left:5px;top:546px;width:1px;height:45px;background:#fff;"></div>
<div class="b" style="left:5px;top:591px;width:1251px;height:1px;background:#000;"></div>
<div class="b" style="left:374px;top:546px;width:1px;height:45px;background:#000;"></div>
<div class="b" style="left:375px;top:546px;width:1px;height:45px;background:#fff;"></div>
<div class="b" style="left:474px;top:546px;width:1px;height:45px;background:#000;"></div>
<div class="b" style="left:475px;top:546px;width:1px;height:45px;background:#fff;"></div>
<div class="b" style="left:574px;top:546px;width:1px;height:45px;background:#000;"></div>
<div class="b" style="left:575px;top:546px;width:1px;height:45px;background:#fff;"></div>
<div class="b" style="left:674px;top:546px;width:1px;height:45px;background:#000;"></div>
<div class="b" style="left:675px;top:546px;width:1px;height:45px;background:#fff;"></div>
<div class="b" style="left:774px;top:546px;width:1px;height:45px;background:#000;"></div>
<div class="b" style="left:775px;top:546px;width:1px;height:45px;background:#fff;"></div>
<div class="b" style="left:874px;top:546px;width:1px;height:45px;background:#000;"></div>
<div class="b" style="left:875px;top:546px;width:1px;height:45px;background:#fff;"></div>
<div class="b" style="left:1255px;top:546px;width:1px;height:46px;background:#000;"></div>
<div class="t" style="top:560px;-webkit-text-stroke:0.3px #dcdad5;left:10px;">Name</div>
<div class="t" style="top:560px;-webkit-text-stroke:0.3px #dcdad5;left:380px;">Incl Cpu</div>
<div class="t" style="top:560px;-webkit-text-stroke:0.3px #dcdad5;left:480px;">Incl Cpu</div>
<div class="t" style="top:560px;-webkit-text-stroke:0.3px #dcdad5;left:580px;">Excl Cpu</div>
<div class="t" style="top:560px;-webkit-text-stroke:0.3px #dcdad5;left:680px;">Excl Cpu</div>
<div class="t" style="top:551px;-webkit-text-stroke:0.3px #dcdad5;left:780px;">Calls+Rec</div>
<div class="t" style="top:569px;-webkit-text-stroke:0.3px #dcdad5;left:780px;">Calls/Tot</div>
<div class="t" style="top:560px;-webkit-text-stroke:0.3px #dcdad5;right:30px;">Cpu Time/Call</div>
<div class="b" style="left:5px;top:592px;width:1251px;height:386px;background:#fff;"></div>
<div class="b" style="left:5px;top:592px;width:1251px;height:26px;background:#4b6983;"></div>
<div class="b" style="left:5px;top:618px;width:1251px;height:104px;background:#e6e6ff;"></div>
<div class="b" style="left:5px;top:722px;width:1251px;height:78px;background:#ffffd2;"></div>
<div class="b" style="left:5px;top:591px;width:1251px;height:0;border-top:1px dotted #fff;"></div>
<div class="b" style="left:5px;top:617px;width:1251px;height:0;border-top:1px dotted #fff;"></div>
<svg style="left:6px;top:601px" width="12" height="8"><path d="M1 1 H10.5 L5.75 6.2 Z" fill="#fff" stroke="#000" stroke-width="1.1"/></svg>
<div class="b" style="left:23px;top:598px;width:8px;height:14px;background:#00ffff;"></div>
<div class="t" style="left:35px;top:596px;width:339px;overflow:hidden;-webkit-text-stroke:0.2px #4b6983;color:#fff;">19 java/util/ArrayList.iterator ()Ljava/util/Iterator;</div>
<div class="t" style="top:596px;-webkit-text-stroke:0.2px #4b6983;right:809px;color:#fff;">3,9%</div>
<div class="t" style="top:596px;-webkit-text-stroke:0.2px #4b6983;right:709px;color:#fff;">137,394</div>
<div class="t" style="top:596px;-webkit-text-stroke:0.2px #4b6983;right:609px;color:#fff;">1,7%</div>
<div class="t" style="top:596px;-webkit-text-stroke:0.2px #4b6983;right:509px;color:#fff;">59,978</div>
<div class="t" style="top:596px;-webkit-text-stroke:0.2px #4b6983;left:796px;color:#fff;">1458+0</div>
<div class="t" style="top:596px;-webkit-text-stroke:0.2px #4b6983;right:29px;color:#fff;">0,094</div>
<svg style="left:22px;top:627px" width="12" height="8"><path d="M1 1 H10.5 L5.75 6.2 Z" fill="#fff" stroke="#000" stroke-width="1.1"/></svg>
<div class="t" style="left:51px;top:622px;width:323px;overflow:hidden;-webkit-text-stroke:0.3px #e6e6ff;">Parents</div>
<div class="b" style="left:55px;top:650px;width:8px;height:14px;background:#cccc00;"></div>
<div class="t" style="left:67px;top:648px;width:307px;overflow:hidden;-webkit-text-stroke:0.3px #e6e6ff;">5 com/rumaxi/gameskel/Scene.tick ()V</div>
<div class="t" style="top:648px;-webkit-text-stroke:0.3px #e6e6ff;right:809px;">34,5%</div>
<div class="t" style="top:648px;-webkit-text-stroke:0.3px #e6e6ff;right:709px;">47,443</div>
<div class="t" style="top:648px;-webkit-text-stroke:0.3px #e6e6ff;left:786px;">487/1458</div>
<div class="b" style="left:55px;top:676px;width:8px;height:14px;background:#99ff99;"></div>
<div class="t" style="left:67px;top:674px;width:307px;overflow:hidden;-webkit-text-stroke:0.3px #e6e6ff;">23 com/rumaxi/gameskel/Scene.collide ()V</div>
<div class="t" style="top:674px;-webkit-text-stroke:0.3px #e6e6ff;right:809px;">33,5%</div>
<div class="t" style="top:674px;-webkit-text-stroke:0.3px #e6e6ff;right:709px;">46,069</div>
<div class="t" style="top:674px;-webkit-text-stroke:0.3px #e6e6ff;left:786px;">485/1458</div>
<div class="b" style="left:55px;top:702px;width:8px;height:14px;background:#994d99;"></div>
<div class="t" style="left:67px;top:700px;width:307px;overflow:hidden;-webkit-text-stroke:0.3px #e6e6ff;">29 com/rumaxi/gameskel/Scene.update ()V</div>
<div class="t" style="top:700px;-webkit-text-stroke:0.3px #e6e6ff;right:809px;">31,9%</div>
<div class="t" style="top:700px;-webkit-text-stroke:0.3px #e6e6ff;right:709px;">43,882</div>
<div class="t" style="top:700px;-webkit-text-stroke:0.3px #e6e6ff;left:786px;">486/1458</div>
<svg style="left:22px;top:731px" width="12" height="8"><path d="M1 1 H10.5 L5.75 6.2 Z" fill="#fff" stroke="#000" stroke-width="1.1"/></svg>
<div class="t" style="left:51px;top:726px;width:323px;overflow:hidden;-webkit-text-stroke:0.3px #ffffd2;">Children</div>
<div class="b" style="left:55px;top:754px;width:8px;height:14px;background:#00ffff;"></div>
<div class="t" style="left:67px;top:752px;width:307px;overflow:hidden;-webkit-text-stroke:0.3px #ffffd2;">self</div>
<div class="t" style="top:752px;-webkit-text-stroke:0.3px #ffffd2;right:809px;">43,7%</div>
<div class="t" style="top:752px;-webkit-text-stroke:0.3px #ffffd2;right:709px;">59,978</div>
<div class="b" style="left:55px;top:780px;width:8px;height:14px;background:#ff0000;"></div>
<div class="t" style="left:67px;top:778px;width:307px;overflow:hidden;-webkit-text-stroke:0.3px #ffffd2;">34 java/util/ArrayList$ArrayListIterator.&lt;init&gt;</div>
<div class="t" style="top:778px;-webkit-text-stroke:0.3px #ffffd2;right:809px;">56,3%</div>
<div class="t" style="top:778px;-webkit-text-stroke:0.3px #ffffd2;right:709px;">77,416</div>
<div class="t" style="top:778px;-webkit-text-stroke:0.3px #ffffd2;left:781px;">1458/1458</div>
<svg style="left:8px;top:807px" width="8" height="13"><path d="M1.8 1.2 V10.2 L6 5.7 Z" fill="#fff" stroke="#000" stroke-width="1.3"/></svg>
<div class="b" style="left:23px;top:806px;width:8px;height:14px;background:#ff66ff;"></div>
<div class="t" style="left:35px;top:804px;width:339px;overflow:hidden;-webkit-text-stroke:0.3px #fff;">20 java/lang/AbstractStringBuilder.append0</div>
<div class="t" style="top:804px;-webkit-text-stroke:0.3px #fff;right:809px;">3,7%</div>
<div class="t" style="top:804px;-webkit-text-stroke:0.3px #fff;right:709px;">128,355</div>
<div class="t" style="top:804px;-webkit-text-stroke:0.3px #fff;right:609px;">1,7%</div>
<div class="t" style="top:804px;-webkit-text-stroke:0.3px #fff;right:509px;">60,600</div>
<div class="t" style="top:804px;-webkit-text-stroke:0.3px #fff;left:796px;">1037+0</div>
<div class="t" style="top:804px;-webkit-text-stroke:0.3px #fff;right:29px;">0,124</div>
<svg style="left:8px;top:833px" width="8" height="13"><path d="M1.8 1.2 V10.2 L6 5.7 Z" fill="#fff" stroke="#000" stroke-width="1.3"/></svg>
<div class="b" style="left:23px;top:832px;width:8px;height:14px;background:#cccc00;"></div>
<div class="t" style="left:35px;top:830px;width:339px;overflow:hidden;-webkit-text-stroke:0.3px #fff;">21 android/graphics/Canvas.native_drawBitmap</div>
<div class="t" style="top:830px;-webkit-text-stroke:0.3px #fff;right:809px;">3,6%</div>
<div class="t" style="top:830px;-webkit-text-stroke:0.3px #fff;right:709px;">127,184</div>
<div class="t" style="top:830px;-webkit-text-stroke:0.3px #fff;right:609px;">3,6%</div>
<div class="t" style="top:830px;-webkit-text-stroke:0.3px #fff;right:509px;">127,184</div>
<div class="t" style="top:830px;-webkit-text-stroke:0.3px #fff;left:801px;">243+0</div>
<div class="t" style="top:830px;-webkit-text-stroke:0.3px #fff;right:29px;">0,523</div>
<svg style="left:8px;top:859px" width="8" height="13"><path d="M1.8 1.2 V10.2 L6 5.7 Z" fill="#fff" stroke="#000" stroke-width="1.3"/></svg>
<div class="b" style="left:23px;top:858px;width:8px;height:14px;background:#3300cc;"></div>
<div class="t" style="left:35px;top:856px;width:339px;overflow:hidden;-webkit-text-stroke:0.3px #fff;">22 android/view/ViewRoot.handleMessage</div>
<div class="t" style="top:856px;-webkit-text-stroke:0.3px #fff;right:809px;">3,5%</div>
<div class="t" style="top:856px;-webkit-text-stroke:0.3px #fff;right:709px;">123,366</div>
<div class="t" style="top:856px;-webkit-text-stroke:0.3px #fff;right:609px;">0,0%</div>
<div class="t" style="top:856px;-webkit-text-stroke:0.3px #fff;right:509px;">0,921</div>
<div class="t" style="top:856px;-webkit-text-stroke:0.3px #fff;left:806px;">13+0</div>
<div class="t" style="top:856px;-webkit-text-stroke:0.3px #fff;right:29px;">9,490</div>
<svg style="left:8px;top:885px" width="8" height="13"><path d="M1.8 1.2 V10.2 L6 5.7 Z" fill="#fff" stroke="#000" stroke-width="1.3"/></svg>
<div class="b" style="left:23px;top:884px;width:8px;height:14px;background:#99ff99;"></div>
<div class="t" style="left:35px;top:882px;width:339px;overflow:hidden;-webkit-text-stroke:0.3px #fff;">23 com/rumaxi/gameskel/Scene.collide ()V</div>
<div class="t" style="top:882px;-webkit-text-stroke:0.3px #fff;right:809px;">3,4%</div>
<div class="t" style="top:882px;-webkit-text-stroke:0.3px #fff;right:709px;">119,341</div>
<div class="t" style="top:882px;-webkit-text-stroke:0.3px #fff;right:609px;">1,2%</div>
<div class="t" style="top:882px;-webkit-text-stroke:0.3px #fff;right:509px;">43,052</div>
<div class="t" style="top:882px;-webkit-text-stroke:0.3px #fff;left:801px;">243+0</div>
<div class="t" style="top:882px;-webkit-text-stroke:0.3px #fff;right:29px;">0,491</div>
<svg style="left:8px;top:911px" width="8" height="13"><path d="M1.8 1.2 V10.2 L6 5.7 Z" fill="#fff" stroke="#000" stroke-width="1.3"/></svg>
<div class="b" style="left:23px;top:910px;width:8px;height:14px;background:#990000;"></div>
<div class="t" style="left:35px;top:908px;width:339px;overflow:hidden;-webkit-text-stroke:0.3px #fff;">24 java/lang/StringBuilder.append (</div>
<div class="t" style="top:908px;-webkit-text-stroke:0.3px #fff;right:809px;">3,2%</div>
<div class="t" style="top:908px;-webkit-text-stroke:0.3px #fff;right:709px;">111,350</div>
<div class="t" style="top:908px;-webkit-text-stroke:0.3px #fff;right:609px;">0,4%</div>
<div class="t" style="top:908px;-webkit-text-stroke:0.3px #fff;right:509px;">14,291</div>
<div class="t" style="top:908px;-webkit-text-stroke:0.3px #fff;left:801px;">494+0</div>
<div class="t" style="top:908px;-webkit-text-stroke:0.3px #fff;right:29px;">0,225</div>
<svg style="left:8px;top:937px" width="8" height="13"><path d="M1.8 1.2 V10.2 L6 5.7 Z" fill="#fff" stroke="#000" stroke-width="1.3"/></svg>
<div class="b" style="left:23px;top:936px;width:8px;height:14px;background:#1f9999;"></div>
<div class="t" style="left:35px;top:934px;width:339px;overflow:hidden;-webkit-text-stroke:0.3px #fff;">25 android/view/ViewRoot.performTraversals</div>
<div class="t" style="top:934px;-webkit-text-stroke:0.3px #fff;right:809px;">2,9%</div>
<div class="t" style="top:934px;-webkit-text-stroke:0.3px #fff;right:709px;">102,392</div>
<div class="t" style="top:934px;-webkit-text-stroke:0.3px #fff;right:609px;">0,1%</div>
<div class="t" style="top:934px;-webkit-text-stroke:0.3px #fff;right:509px;">2,908</div>
<div class="t" style="top:934px;-webkit-text-stroke:0.3px #fff;left:811px;">4+0</div>
<div class="t" style="top:934px;-webkit-text-stroke:0.3px #fff;right:29px;">25,598</div>
<svg style="left:8px;top:963px" width="8" height="13"><path d="M1.8 1.2 V10.2 L6 5.7 Z" fill="#fff" stroke="#000" stroke-width="1.3"/></svg>
<div class="b" style="left:23px;top:962px;width:8px;height:14px;background:#c6c6ff;"></div>
<div class="t" style="left:35px;top:960px;width:339px;overflow:hidden;-webkit-text-stroke:0.3px #fff;">26 android/view/Surface.lockCanvas (</div>
<div class="t" style="top:960px;-webkit-text-stroke:0.3px #fff;right:809px;">2,8%</div>
<div class="t" style="top:960px;-webkit-text-stroke:0.3px #fff;right:709px;">98,954</div>
<div class="t" style="top:960px;-webkit-text-stroke:0.3px #fff;right:609px;">0,3%</div>
<div class="t" style="top:960px;-webkit-text-stroke:0.3px #fff;right:509px;">9,131</div>
<div class="t" style="top:960px;-webkit-text-stroke:0.3px #fff;left:801px;">244+0</div>
<div class="t" style="top:960px;-webkit-text-stroke:0.3px #fff;right:29px;">0,406</div>
<div class="b" style="left:0px;top:978px;width:1280px;height:46px;background:#dcdad5;"></div>
<div class="b" style="left:1259px;top:546px;width:15px;height:432px;background:#c4c2bd;box-sizing:border-box;border-left:1px solid #8e8c87;border-top:1px solid #8e8c87;"></div>
<div class="b" style="left:1260px;top:547px;width:14px;height:14px;background:#dcdad5;box-sizing:border-box;border:1px solid;border-color:#fff #000 #000 #fff;box-shadow:inset -1px -1px 0 #9e9c97;"></div>
<svg style="left:1262px;top:550px" width="10" height="8"><path d="M1 6 L5 1 L9 6 Z" fill="#000"/></svg>
<div class="b" style="left:1260px;top:568px;width:14px;height:21px;background:#dcdad5;box-sizing:border-box;border:1px solid;border-color:#fff #000 #000 #fff;box-shadow:inset -1px -1px 0 #9e9c97;"></div>
<div class="b" style="left:1260px;top:964px;width:14px;height:14px;background:#dcdad5;box-sizing:border-box;border:1px solid;border-color:#fff #000 #000 #fff;box-shadow:inset -1px -1px 0 #9e9c97;"></div>
<svg style="left:1262px;top:968px" width="10" height="8"><path d="M1 1 L5 6 L9 1 Z" fill="#000"/></svg>
<div class="t" style="top:992px;-webkit-text-stroke:0.3px #dcdad5;left:10px;">Find:</div>
<div class="b" style="left:65px;top:988px;width:1205px;height:25px;background:#fff;box-sizing:border-box;border:1px solid;border-color:#8e8c87 #fff #fff #8e8c87;box-shadow:inset 1px 1px 0 #000, inset -1px -1px 0 #dcdad5;"></div>
</div>
</body></html>
